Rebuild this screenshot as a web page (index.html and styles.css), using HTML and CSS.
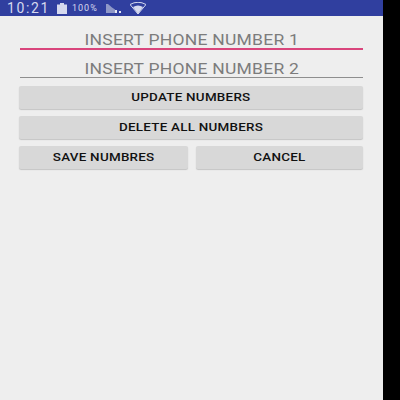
FILE: index.html
```html
<!DOCTYPE html>
<html lang="en">
<head>
  <meta charset="UTF-8">
  <title>Phone numbers</title>
  <link rel="stylesheet" href="styles.css">
</head>
<body>
  <div class="screen">
    <div class="status-bar">
      <span class="clock">10:21</span>
      <svg class="battery" width="10" height="11" viewBox="0 0 10 11"><path d="M3 0h4v1.500h3V11H0V1.500h3z" fill="#d5d9ee"/></svg>
      <span class="percent">100%</span>
      <svg class="signal" width="15" height="10" viewBox="0 0 15 10"><path d="M0 10V1h2l4 3.500 3 2V10z" fill="#8f98c8"/><path d="M9 7h2v3H9zM13 8h2v2h-2z" fill="#e4e6f3"/></svg>
      <svg class="wifi" width="16" height="12" viewBox="0 0 16 12"><path d="M0 2.500Q8-2 16 2.500L8 12z" fill="none" stroke="#d5d9ee" stroke-width="1"/><path d="M3 5Q8 2 13 5L8 12z" fill="#d5d9ee"/></svg>
    </div>

    <div class="content">
      <div class="field focused"><span class="hint">INSERT PHONE NUMBER 1</span></div>
      <div class="field"><span class="hint">INSERT PHONE NUMBER 2</span></div>

      <div class="btn"><span class="btn-label">UPDATE NUMBERS</span></div>
      <div class="btn"><span class="btn-label">DELETE ALL NUMBERS</span></div>
      <div class="btn-row">
        <div class="btn"><span class="btn-label">SAVE NUMBRES</span></div>
        <div class="btn"><span class="btn-label">CANCEL</span></div>
      </div>
    </div>
  </div>
</body>
</html>
```

FILE: styles.css
```css
html, body {
  height: 100%;
}

body {
  margin: 0;
  background-color: #000;
  font-family: Roboto, "Liberation Sans", sans-serif;
  overflow: hidden;
}

.screen {
  width: 383px;
  height: 400px;
  background-color: #eeeeee;
}

.status-bar {
  display: flex;
  align-items: center;
  height: 16px;
  padding-left: 7px;
  background-color: #303f9f;
  color: #d5d9ee;
}

.clock {
  font-size: 14px;
  width: 42px;
  letter-spacing: 1.6px;
}

.battery {
  margin-left: 8px;
}

.percent {
  width: 28px;
  font-size: 9px;
  margin-left: 5px;
  letter-spacing: 1px;
}

.signal {
  margin-left: 6px;
}

.wifi {
  margin-left: 9px;
}

.content {
  display: flex;
  flex-direction: column;
  padding: 14px 20px 0 19px;
}

.field {
  height: 18px;
  margin-bottom: 8px;
  margin-left: 1px;
  border-bottom: 1px solid #8e8e8e;
  text-align: center;
}

.field.focused {
  border-bottom: 2px solid #d9457c;
  margin-bottom: 9px;
}

.hint {
  display: inline-block;
  font-size: 14px;
  line-height: 19px;
  color: #7c7c7c;
  letter-spacing: 0.2px;
  transform: scaleX(1.25);
}

.btn {
  display: flex;
  align-items: center;
  justify-content: center;
  height: 23px;
  margin-bottom: 7px;
  background-color: #d8d8d8;
  border-radius: 2px;
  box-shadow: 0 1px 1px #c4c4c4;
}

.btn-row {
  display: flex;
  gap: 8px;
}

.btn-row .btn:first-child {
  width: 169px;
}

.btn-row .btn:last-child {
  flex: 1;
}

.btn-label {
  display: inline-block;
  font-size: 11px;
  font-weight: 500;
  color: #111;
  letter-spacing: 0.2px;
  transform: scaleX(1.22);
}
```
